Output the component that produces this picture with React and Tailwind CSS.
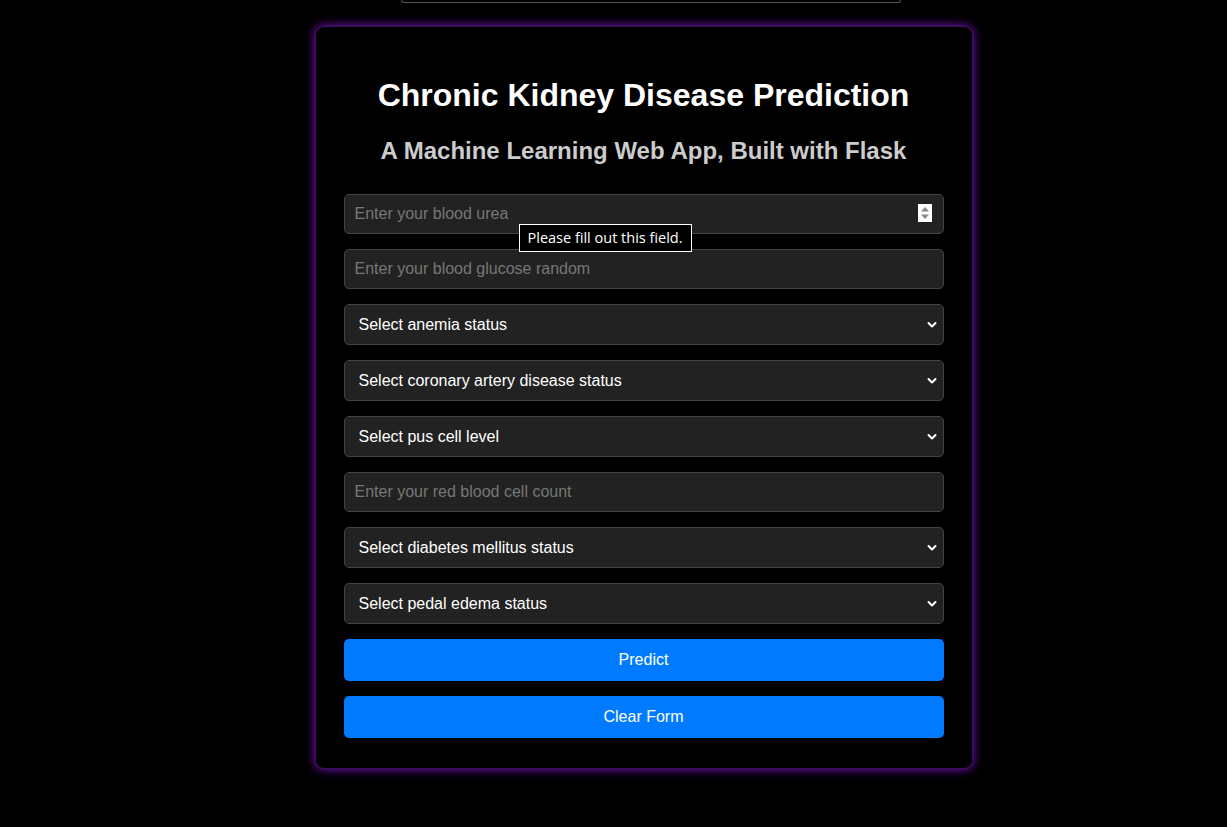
import React from "react";

function Chevron() {
  return (
    <svg className="pointer-events-none absolute right-[7px] top-1/2 -translate-y-1/2" width="10" height="8" viewBox="0 0 10 8">
      <path d="M1.5 2 L5 5.5 L8.5 2" stroke="#ffffff" strokeWidth="2" fill="none" strokeLinecap="round" strokeLinejoin="round" />
    </svg>
  );
}

function SelectField({ label }) {
  return (
    <div className="relative">
      <select
        defaultValue=""
        className="block h-[41px] w-full appearance-none rounded-[5px] border border-[#444] bg-[#222] pl-[14px] pr-[24px] text-[16px] text-white outline-none"
        style={{ fontFamily: '"Liberation Sans", Arial, sans-serif' }}
      >
        <option value="" disabled>{label}</option>
      </select>
      <Chevron />
    </div>
  );
}

function InputField({ placeholder, spinner, tooltip }) {
  return (
    <div className="relative">
      <input
        type="text"
        placeholder={placeholder}
        className="block h-[40px] w-full rounded-[5px] border border-[#444] bg-[#222] px-[10px] text-[16px] text-white outline-none placeholder:text-[#777]"
        style={{ fontFamily: '"Liberation Sans", Arial, sans-serif' }}
      />
      {spinner && (
        <div className="pointer-events-none absolute left-[574px] top-[10px] h-[18px] w-[14px] bg-white">
          <svg width="14" height="18" viewBox="0 0 14 18">
            <path d="M3 7.5 L7 3 L11 7.5 Z" fill="#8a8a8a" />
            <path d="M3 10.5 L7 15 L11 10.5 Z" fill="#8a8a8a" />
          </svg>
        </div>
      )}
      {tooltip && (
        <div
          className="absolute left-[175px] top-[30px] z-10 flex h-[28px] w-[173px] items-center justify-center whitespace-nowrap border border-white bg-black text-[14.5px] text-white"
          style={{ fontFamily: '"Open Sans", "DejaVu Sans", sans-serif' }}
        >
          Please fill out this field.
        </div>
      )}
    </div>
  );
}

export default function App() {
  return (
    <div
      className="min-h-[827px] w-full bg-black"
      style={{ fontFamily: '"Liberation Sans", Arial, sans-serif' }}
    >
      <div className="flex justify-center pl-[74px]">
        <div className="h-[3px] w-[500px] rounded-b-[5px] border-x border-b border-[#555]" />
      </div>
      <div className="flex justify-center pl-[60px]">
        <div className="mt-[22px] w-[660px] rounded-[10px] border-2 border-[#3c0a5e] px-[28px] pt-[28px] pb-[30px] shadow-[0_0_10px_#6a0dad]">
          <h1 className="mt-[22px] text-center text-[32px] font-bold leading-[37px] text-white">
            Chronic Kidney Disease Prediction
          </h1>
          <h2 className="mt-[23px] text-center text-[24px] font-bold leading-[28px] text-[#cccccc]">
            A Machine Learning Web App, Built with Flask
          </h2>
          <form className="mt-[29px] flex flex-col gap-[15px]">
            <InputField placeholder="Enter your blood urea" spinner tooltip />
            <InputField placeholder="Enter your blood glucose random" />
            <SelectField label="Select anemia status" />
            <SelectField label="Select coronary artery disease status" />
            <SelectField label="Select pus cell level" />
            <InputField placeholder="Enter your red blood cell count" />
            <SelectField label="Select diabetes mellitus status" />
            <SelectField label="Select pedal edema status" />
            <button type="button" className="h-[42px] w-full rounded-[5px] bg-[#007bff] text-[16px] text-white">
              Predict
            </button>
            <button type="button" className="h-[42px] w-full rounded-[5px] bg-[#007bff] text-[16px] text-white">
              Clear Form
            </button>
          </form>
        </div>
      </div>
    </div>
  );
}
